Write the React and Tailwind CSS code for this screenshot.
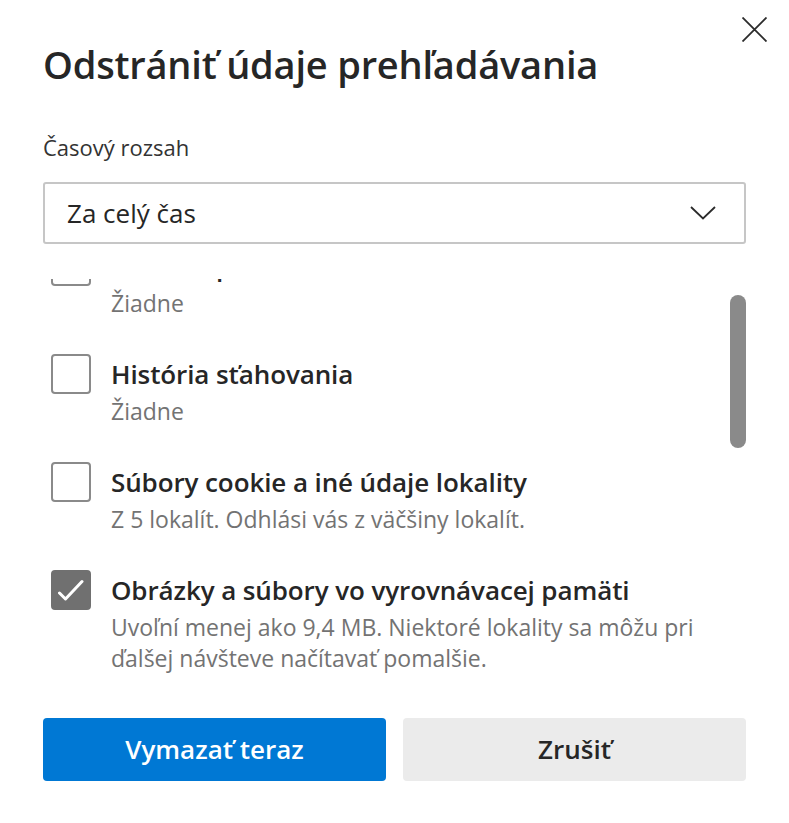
import { useState } from "react";

const ITEMS = [
  { title: "História prehľadávania", desc: ["Žiadne"], checked: false },
  { title: "História sťahovania", desc: ["Žiadne"], checked: false },
  { title: "Súbory cookie a iné údaje lokality", desc: ["Z 5 lokalít. Odhlási vás z väčšiny lokalít."], checked: false },
  {
    title: "Obrázky a súbory vo vyrovnávacej pamäti",
    desc: ["Uvoľní menej ako 9,4 MB. Niektoré lokality sa môžu pri", "ďalšej návšteve načítavať pomalšie."],
    checked: true,
  },
];

function Checkbox({ checked, onClick }) {
  return (
    <button
      type="button"
      onClick={onClick}
      className={`flex h-[40px] w-[40px] shrink-0 items-center justify-center rounded-[4px] border-2 ${
        checked ? "border-[#707070] bg-[#707070]" : "border-[#8a8a8a] bg-white"
      }`}
    >
      {checked && (
        <svg width="26" height="26" viewBox="0 0 26 26" fill="none">
          <path d="M1.5 16 L7.5 22 L24 4.5" stroke="white" strokeWidth="3" strokeLinecap="round" strokeLinejoin="round" />
        </svg>
      )}
    </button>
  );
}

export default function App() {
  const [items, setItems] = useState(ITEMS);

  const toggle = (idx) =>
    setItems((prev) => prev.map((it, i) => (i === idx ? { ...it, checked: !it.checked } : it)));

  return (
    <div className="h-[823px] w-[789px] bg-white font-['Segoe_UI','Open_Sans',sans-serif] text-[#262626]">
      <div className="flex justify-end pr-[22px] pt-[17px]">
        <button type="button" aria-label="Zavrieť" className="h-[25px] w-[25px]">
          <svg width="25" height="25" viewBox="0 0 25 25" fill="none">
            <path d="M0.5 0.5 L24.5 24.5 M24.5 0.5 L0.5 24.5" stroke="#2b2b2b" strokeWidth="1.8" />
          </svg>
        </button>
      </div>

      <div className="px-[43px]">
        <h1 className="-mt-[2px] text-[38px] font-semibold leading-[48px] tracking-[-0.2px]">
          Odstrániť údaje prehľadávania
        </h1>

        <p className="mt-[44px] text-[22px] leading-[30px] text-[#333]">Časový rozsah</p>

        <div className="mt-[20px] flex h-[62px] items-center justify-between rounded-[3px] border-2 border-[#c6c6c6] pl-[22px] pr-[28px]">
          <span className="text-[26px] text-[#262626]">Za celý čas</span>
          <svg width="26" height="14" viewBox="0 0 26 14" fill="none">
            <path d="M1 1 L13 12.5 L25 1" stroke="#2b2b2b" strokeWidth="1.8" />
          </svg>
        </div>

        <div className="mt-[35px] flex h-[412px]">
          <div className="flex-1 overflow-hidden">
            <div className="-mt-[33px] flex flex-col gap-[35px] pl-[8px]">
              {items.map((it, idx) => (
                <div key={it.title} className="flex gap-[20px]">
                  <Checkbox checked={it.checked} onClick={() => toggle(idx)} />
                  <div>
                    <p className="text-[26px] font-semibold leading-[40px] tracking-[-0.1px] text-[#262626]">{it.title}</p>
                    <div className="mt-[2px] text-[23px] leading-[31px] text-[#737373]">
                      {it.desc.map((line) => (
                        <p key={line}>{line}</p>
                      ))}
                    </div>
                  </div>
                </div>
              ))}
            </div>
          </div>
          <div className="w-[16px] pt-[16px]">
            <div className="h-[153px] w-[16px] rounded-full bg-[#8a8a8a]" />
          </div>
        </div>

        <div className="mt-[27px] flex gap-[17px]">
          <button
            type="button"
            className="h-[63px] flex-1 rounded-[4px] bg-[#0078d4] text-[26px] font-semibold text-white"
          >
            Vymazať teraz
          </button>
          <button
            type="button"
            className="h-[63px] flex-1 rounded-[4px] bg-[#ebebeb] text-[26px] font-semibold text-[#262626]"
          >
            Zrušiť
          </button>
        </div>
      </div>
    </div>
  );
}
